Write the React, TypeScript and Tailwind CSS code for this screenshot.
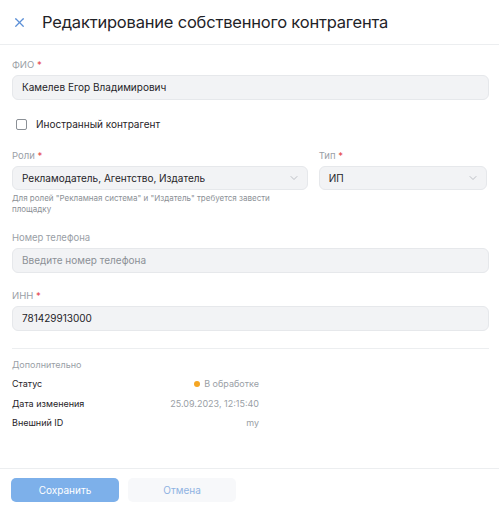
import React from 'react';
import { X, ChevronDown } from 'lucide-react';

const Label = ({ text, required }: { text: string; required?: boolean }) => (
  <div className="text-[9.5px] leading-[12px] text-[#9aa0a6] mb-[4px]">
    {text}
    {required && <span className="text-[#e5484d]"> *</span>}
  </div>
);

const Row = ({ label, children }: { label: string; children: React.ReactNode }) => (
  <div className="flex items-center h-[19.5px] w-[247px]">
    <span className="text-[9px] text-[#1f2328] w-[120px]">{label}</span>
    <span className="flex-1 flex items-center justify-end text-[9px] text-[#9aa0a6]">{children}</span>
  </div>
);

const field =
  'rounded-[6px] bg-[#f2f3f5] border border-[#e6e8eb] flex items-center text-[10px]';

export default function App() {
  return (
    <div
      className="w-[499px] h-[508px] bg-white flex flex-col"
      style={{ fontFamily: 'Inter, "Noto Sans", sans-serif' }}
    >
      <div className="h-[45px] flex items-center px-[12px] gap-[15px] border-b border-[#eceef0] shrink-0">
        <X className="w-[15px] h-[15px] text-[#5b8fd6]" strokeWidth={2} />
        <h1 className="text-[16.5px] text-[#1f2328] tracking-[-0.2px]">
          Редактирование собственного контрагента
        </h1>
      </div>

      <div className="flex-1 px-[12px] pt-[14px]">
        <Label text="ФИО" required />
        <div className={`${field} h-[25px] w-[477px] px-[9px] text-[#1f2328]`}>
          Камелев Егор Владимирович
        </div>

        <label className="flex items-center gap-[9px] mt-[17px] pl-[4px] leading-[14px]">
          <span className="w-[11px] h-[11px] rounded-[2px] border border-[#8b9096] bg-white" />
          <span className="text-[10px] text-[#1f2328]">Иностранный контрагент</span>
        </label>

        <div className="flex gap-[11px] mt-[19px]">
          <div className="w-[297px]">
            <Label text="Роли" required />
            <div className={`${field} h-[24px] justify-between pl-[9px] pr-[7px] text-[#1f2328]`}>
              <span>Рекламодатель, Агентство, Издатель</span>
              <ChevronDown className="w-[12px] h-[12px] text-[#a9aeb4]" strokeWidth={1.5} />
            </div>
          </div>
          <div className="w-[169px]">
            <Label text="Тип" required />
            <div className={`${field} h-[24px] justify-between pl-[9px] pr-[7px] text-[#1f2328]`}>
              <span>ИП</span>
              <ChevronDown className="w-[12px] h-[12px] text-[#a9aeb4]" strokeWidth={1.5} />
            </div>
          </div>
        </div>
        <p className="text-[8px] leading-[11px] text-[#8b9096] mt-[3px] w-[280px]">
          Для ролей "Рекламная система" и "Издатель" требуется завести площадку
        </p>

        <div className="mt-[17px]">
          <Label text="Номер телефона" />
          <div className={`${field} h-[25px] w-[477px] px-[9px] text-[#8b9096]`}>
            Введите номер телефона
          </div>
        </div>

        <div className="mt-[17px]">
          <Label text="ИНН" required />
          <div className={`${field} h-[25px] w-[477px] px-[9px] text-[#1f2328]`}>
            781429913000
          </div>
        </div>

        <div className="border-t border-[#eceef0] mt-[17px] w-[477px]" />

        <div className="text-[9px] leading-[12px] text-[#9aa0a6] mt-[10px] mb-[3px]">Дополнительно</div>
        <Row label="Статус">
          <span className="w-[6px] h-[6px] rounded-full bg-[#f5a623] mr-[4px]" />
          В обработке
        </Row>
        <Row label="Дата изменения">25.09.2023, 12:15:40</Row>
        <Row label="Внешний ID">my</Row>
      </div>

      <div className="h-[40px] border-t border-[#eceef0] flex items-start pt-[9px] px-[11px] gap-[9px] shrink-0">
        <button className="w-[108px] h-[24px] rounded-[5px] bg-[#7db0ea] text-white text-[10px]">
          Сохранить
        </button>
        <button className="w-[108px] h-[24px] rounded-[5px] bg-[#f7f8fa] text-[#8fb3e2] text-[10px]">
          Отмена
        </button>
      </div>
    </div>
  );
}
